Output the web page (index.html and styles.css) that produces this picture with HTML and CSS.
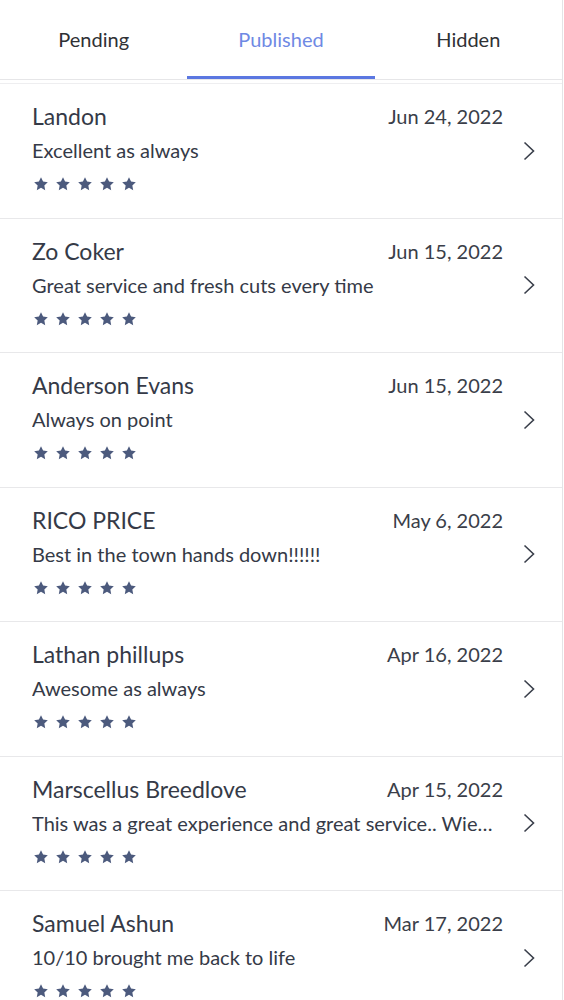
FILE: index.html
```html
<!DOCTYPE html>
<html>
<head>
	<title>Reviews</title>
	<meta charset="utf-8">
	<link rel="stylesheet" href="styles.css">
</head>
<body>
	<div class="screen">
		<nav class="tabs">
			<a class="tab">Pending</a>
			<a class="tab active">Published</a>
			<a class="tab">Hidden</a>
		</nav>
		<ul class="reviews" id="reviews"></ul>
	</div>
	<script type="text/javascript">
		var list = document.getElementById("reviews");
		var reviews = [
			["Landon", "Jun 24, 2022", "Excellent as always"],
			["Zo Coker", "Jun 15, 2022", "Great service and fresh cuts every time"],
			["Anderson Evans", "Jun 15, 2022", "Always on point"],
			["RICO PRICE", "May 6, 2022", "Best in the town hands down!!!!!!"],
			["Lathan phillups", "Apr 16, 2022", "Awesome as always"],
			["Marscellus Breedlove", "Apr 15, 2022", "This was a great experience and great service.. Wiener was awesome"],
			["Samuel Ashun", "Mar 17, 2022", "10/10 brought me back to life"]
		];
		var star = '<svg class="star" viewBox="0 0 24 24"><path d="M12 1.8l3.1 6.6 7.1.9-5.2 4.9 1.3 7.1L12 17.8l-6.3 3.5 1.3-7.1L1.8 9.3l7.1-.9z"/></svg>';
		var chevron = '<svg viewBox="0 0 12 20" width="12" height="20"><path d="M1.5 1.5L10.5 10l-9 8.5" fill="none" stroke="#3a3f4b" stroke-width="1.6"/></svg>';
		function render() {
			var html = "";
			for (var i = 0; i < reviews.length; i++) {
				var r = reviews[i];
				html += '<li class="review">' +
					'<div class="review-body">' +
						'<div class="review-head"><span class="name">' + r[0] + '</span><span class="date">' + r[1] + '</span></div>' +
						'<p class="comment">' + r[2] + '</p>' +
						'<div class="stars">' + star + star + star + star + star + '</div>' +
					'</div>' +
					'<div class="chevron">' + chevron + '</div>' +
				'</li>';
			}
			list.innerHTML = html;
		}
		render();
	</script>
</body>
</html>
```

FILE: styles.css
```css
*{
	padding: 0;
	margin: 0;
	box-sizing: border-box;
}
body{
	background: #fff;
	font-family: Lato, "Noto Sans", sans-serif;
	color: #353a47;
}
.screen{
	width: 563px;
	border-right: 1px solid #e4e4e6;
	min-height: 1000px;
}
.tabs{
	display: flex;
	height: 80px;
	border-bottom: 1px solid #e6e6e8;
}
.tab{
	flex: 1;
	display: flex;
	align-items: center;
	justify-content: center;
	font-size: 20px;
	color: #2f3135;
	padding-top: 2px;
	border-bottom: 3px solid transparent;
}
.tab.active{
	color: #6f89e4;
	border-bottom-color: #5b77e1;
}
.reviews{
	list-style: none;
	margin-top: 3px;
	border-top: 1px solid #eeeef0;
}
.review{
	display: flex;
	align-items: flex-start;
	height: 134.5px;
	padding: 18px 0 0 32px;
	border-bottom: 1px solid #e8e8ea;
}
.review-body{
	flex: 1;
	min-width: 0;
}
.review-head{
	display: flex;
	justify-content: space-between;
	align-items: center;
	height: 28px;
}
.name{
	font-size: 23px;
}
.date{
	font-size: 20px;
	color: #3a3e49;
}
.comment{
	font-size: 20px;
	line-height: 26px;
	margin-top: 7px;
	white-space: nowrap;
	overflow: hidden;
	text-overflow: ellipsis;
	padding-right: 10px;
}
.stars{
	display: flex;
	gap: 6px;
	margin-top: 13px;
	padding-left: 1px;
}
.star{
	width: 16px;
	height: 16px;
	fill: #4c5a7d;
}
.chevron{
	width: 59px;
	align-self: center;
	display: flex;
	justify-content: center;
	padding-right: 8px;
	margin-top: -18px;
}
```
